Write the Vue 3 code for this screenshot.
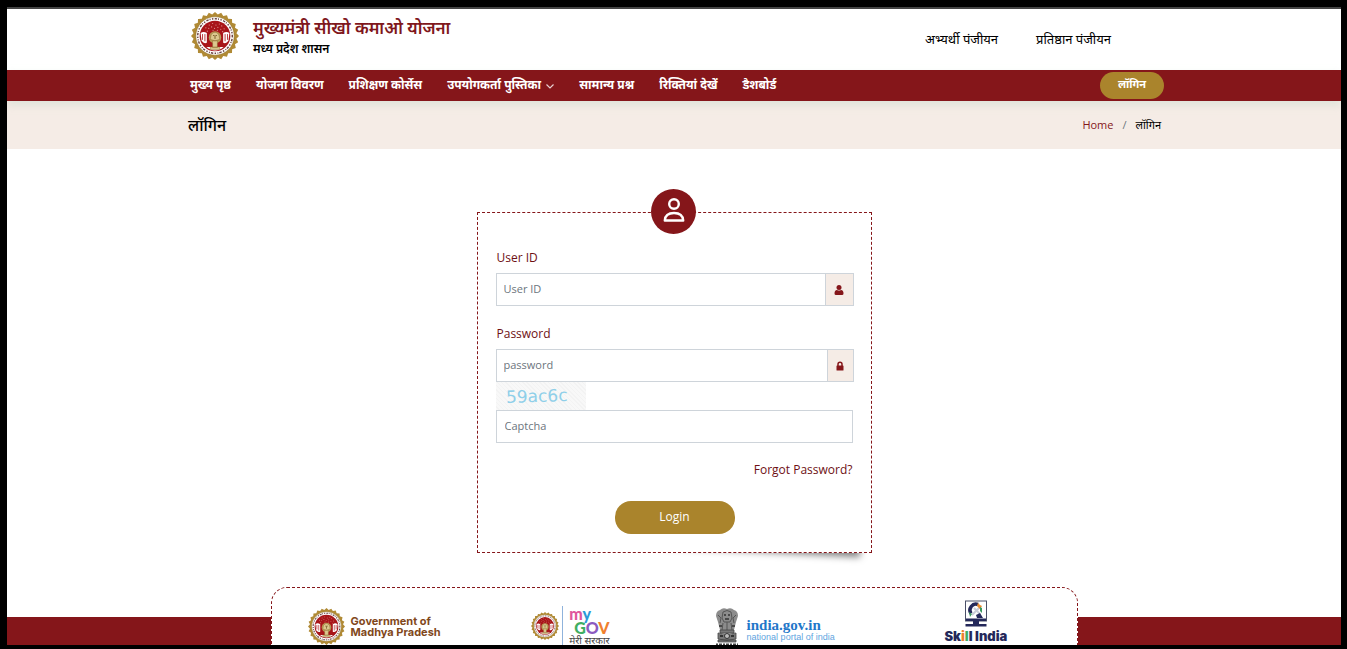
<template>
  <div class="page">
    <!-- shared artwork -->
    <svg class="sprite" aria-hidden="true">
      <symbol id="seal" viewBox="0 0 100 100">
        <path :d="sealEdge" fill="#b08a35" />
        <circle cx="50" cy="50" r="40" fill="#fff" stroke="#8d6d2a" stroke-width="1" />
        <circle cx="50" cy="50" r="36" fill="none" stroke="#6b4444" stroke-width="3" stroke-dasharray="3 3 5 2 2 3" />
        <circle cx="50" cy="50" r="32" fill="#a81519" />
        <g fill="#e09c97">
          <circle v-for="(d, i) in leaves" :key="i" :cx="d[0]" :cy="d[1]" r="1.2" />
        </g>
        <path d="M20 44q6-5 13 0v20q-6 3-11-4zM80 44q-6-5-13 0v20q6 3 11-4z" fill="#fff" />
        <path d="M24 46v12M29 46v15M76 46v12M71 46v15" stroke="#b9383a" stroke-width="2" />
        <path d="M32 73h36q-8 7-18 7t-18-7z" fill="#fff" />
        <circle cx="50" cy="53" r="13" fill="#b99b55" />
        <path d="M42 47q8-10 16 0l2 10q-10 6-20 0zM45 60h10v14H45zM40 73h20v5H40z" fill="#dcc88e" stroke="#86652b" stroke-width="1" />
        <path d="M46 49h2M52 49h2M50 48v8" stroke="#765724" stroke-width="2" />
      </symbol>
    </svg>

    <header class="header">
      <div class="container header-inner">
        <a href="#" class="brand">
          <svg class="brand-logo" aria-hidden="true"><use href="#seal" /></svg>
          <span class="brand-text">
            <strong class="brand-title">मुख्यमंत्री सीखो कमाओ योजना</strong>
            <strong class="brand-sub">मध्य प्रदेश शासन</strong>
          </span>
        </a>
        <div class="register-links">
          <a href="#">अभ्यर्थी पंजीयन</a>
          <a href="#">प्रतिष्ठान पंजीयन</a>
        </div>
      </div>
    </header>

    <nav class="navbar">
      <div class="container navbar-inner">
        <ul class="menu">
          <li v-for="item in menu" :key="item.label">
            <a href="#">
              {{ item.label }}
              <svg v-if="item.children" class="chevron" viewBox="0 0 8 5" aria-hidden="true">
                <path d="M.5.5 4 4 7.5.5" fill="none" stroke="#e8cfd0" stroke-width="1.200" />
              </svg>
            </a>
          </li>
        </ul>
        <a href="#" class="nav-login">लॉगिन</a>
      </div>
    </nav>

    <section class="title-bar">
      <div class="container title-inner">
        <h1>लॉगिन</h1>
        <div class="breadcrumb">
          <a href="#">Home</a>
          <span class="slash">/</span>
          <span>लॉगिन</span>
        </div>
      </div>
    </section>

    <main class="main">
      <form class="login-card" @submit.prevent>
        <div class="avatar">
          <svg viewBox="0 0 22 24" aria-hidden="true">
            <g fill="none" stroke="#fff" stroke-width="2.400">
              <circle cx="11" cy="6" r="4.800" />
              <path d="M1.800 22.500q.5-7.500 9.200-7.500t9.200 7.500z" stroke-linejoin="round" />
            </g>
          </svg>
        </div>

        <label for="userId">User ID</label>
        <div class="input-group">
          <input id="userId" v-model="userId" type="text" placeholder="User ID" />
          <span class="addon">
            <svg viewBox="0 0 10 10" aria-hidden="true">
              <circle cx="5" cy="2.500" r="2.500" />
              <path d="M.5 8.500Q.5 5 3 5q2 1.200 4 0 2.500 0 2.500 3.500Q9.500 10 8 10H2Q.5 10 .5 8.500z" />
            </svg>
          </span>
        </div>

        <label for="password">Password</label>
        <div class="input-group">
          <input id="password" v-model="password" type="password" placeholder="password" />
          <span class="addon addon-lock">
            <svg viewBox="0 0 10 10" aria-hidden="true">
              <path d="M3 5V3.200a2 2 0 0 1 4 0V5" fill="none" stroke="#85161a" stroke-width="1.500" />
              <rect x="1.500" y="4.500" width="7" height="5" rx=".6" />
            </svg>
          </span>
        </div>

        <div class="captcha"><span>59ac6c</span></div>
        <input v-model="captcha" class="captcha-input" type="text" placeholder="Captcha" aria-label="Captcha" />

        <a href="#" class="forgot">Forgot Password?</a>
        <button type="submit" class="login-btn">Login</button>
      </form>
    </main>

    <footer class="footer">
      <div class="partners">
        <a href="#" class="partner gov">
          <svg class="gov-logo" aria-hidden="true"><use href="#seal" /></svg>
          <span>Government of<br />Madhya Pradesh</span>
        </a>
        <a href="#" class="partner mygov">
          <svg class="mygov-logo" aria-hidden="true"><use href="#seal" /></svg>
          <span class="mygov-text">
            <b class="my"><i class="pink">m</i><i class="blue">y</i></b>
            <b class="gv"><i class="green">G</i><i class="violet">O</i><i class="orange">V</i></b>
            <small>मेरी सरकार</small>
          </span>
        </a>
        <a href="#" class="partner india">
          <svg class="lions" viewBox="0 0 24 38" aria-hidden="true">
            <path d="M5 2q3-3 7-1 4-2 7 1 4 1 4 6l-2 6-2 8H5l-2-8-2-6q0-5 4-6z" fill="#8c8c8c" />
            <path d="M8 4q4-3 8 0l1 6-2 4H9l-2-4zM3 7l3 3-1 5M21 7l-3 3 1 5M8 15l-1 7M16 15l1 7M12 14v8" fill="none" stroke="#555" />
            <path d="M9 7h2M13 7h2M10 11h4M4 18h3M17 18h3" stroke="#333" stroke-width="1.500" />
            <path d="M5 22h14v3H5zM3 25q9 3 18 0v6q-9 3-18 0zM3 32h18v2H3z" fill="#777" stroke="#444" stroke-width=".8" />
            <circle cx="12" cy="28" r="2.500" fill="#bbb" stroke="#333" />
            <path d="M5 28h3M16 28h3" stroke="#333" stroke-width="2" />
            <path d="M1 36.500h22" stroke="#444" stroke-width="2" stroke-dasharray="2 1 3 1" />
          </svg>
          <span class="india-text"><b>india.gov.in</b><small>national portal of india</small></span>
        </a>
        <a href="#" class="partner skill">
          <svg viewBox="0 0 24 28" aria-hidden="true">
            <rect x="1.500" y="1" width="21" height="20" fill="#fff" stroke="#4b5068" />
            <path d="M2 18.500h20V21H2zM9 21h6v3H9zM1.500 24h21v2.500h-21z" fill="#24285a" />
            <path d="M14 4.500a6 6 0 0 0-7 9" fill="none" stroke="#24285a" stroke-width="3.500" />
            <path d="m8 15 8-8M10 8l6 6" stroke="#c9cdd8" stroke-width="2" />
            <path d="m14 3 2 2 2 1-2 3-3-3z" fill="#e98b2f" />
            <path d="m16 7 2 1v5l-2-2zM5 12l3 2-2 3z" fill="#3c9960" />
            <path d="m12 15 4-2 3 5h-6z" fill="#24285a" />
          </svg>
          <b>Sk<i class="orange">i</i><i class="green">l</i>l India</b>
        </a>
      </div>
    </footer>
  </div>
</template>

<script setup>
import { ref } from 'vue';

const userId = ref('');
const password = ref('');
const captcha = ref('');

const menu = [
  { label: 'मुख्य पृष्ठ' },
  { label: 'योजना विवरण' },
  { label: 'प्रशिक्षण कोर्सेस' },
  { label: 'उपयोगकर्ता पुस्तिका', children: true },
  { label: 'सामान्य प्रश्न' },
  { label: 'रिक्तियां देखें' },
  { label: 'डैशबोर्ड' },
];

// Pointed rim of the state seal
const teeth = 24;
const sealEdge =
  Array.from({ length: teeth * 2 }, (_, i) => {
    const r = i % 2 ? 45 : 50;
    const a = (i * Math.PI) / teeth;
    return `${i ? 'L' : 'M'}${(50 + r * Math.cos(a)).toFixed(1)} ${(50 + r * Math.sin(a)).toFixed(1)}`;
  }).join('') + 'z';

// Leaves of the banyan tree inside the seal
const leaves = [
  [38, 27], [45, 24], [52, 27], [59, 25], [64, 29], [31, 33], [37, 34], [43, 31],
  [49, 34], [56, 32], [62, 36], [69, 35], [34, 40], [66, 41], [46, 38], [55, 38],
];
</script>

<style>
body {
  margin: 0;
}
</style>

<style scoped>
.page {
  display: flex;
  flex-direction: column;
  box-sizing: border-box;
  height: 100vh;
  overflow: hidden;
  border: solid #000;
  border-width: 7px 6px 4px 7px;
  background: #fff;
  color: #000;
  font-family: "Open Sans", "Noto Sans", "Noto Sans Devanagari", sans-serif;
  font-size: 12px;
}

.page * {
  box-sizing: border-box;
}

.page > * {
  flex-shrink: 0;
}

a {
  color: inherit;
  text-decoration: none;
}

i {
  font-style: normal;
}

.sprite {
  position: absolute;
  width: 0;
  height: 0;
}

.container {
  width: 100%;
  max-width: 980px;
  margin: 0 auto;
  padding-left: 4px;
}

/* Header */
.header {
  border-top: 2px solid #444;
}

.header-inner {
  display: flex;
  align-items: center;
  justify-content: space-between;
  height: 61px;
}

.brand {
  display: flex;
  align-items: center;
  gap: 14px;
  padding: 0 0 7px 3px;
}

.brand-logo {
  width: 48px;
  height: 48px;
}

.brand-text {
  display: flex;
  flex-direction: column;
  padding-top: 2px;
}

.brand-title {
  color: #7f171c;
  font-size: 17px;
  font-weight: 600;
  line-height: 24px;
}

.brand-sub {
  font-size: 12px;
  font-weight: 600;
  line-height: 18px;
}

.register-links {
  display: flex;
  gap: 38px;
  padding: 0 53px 2px 0;
  font-size: 13px;
}

/* Navigation */
.navbar {
  position: relative;
  background: #85161a;
  color: #fff;
  box-shadow: 0 4px 8px rgba(190, 215, 200, 0.4);
}

.navbar-inner {
  display: flex;
  align-items: center;
  justify-content: space-between;
  height: 31px;
}

.menu {
  display: flex;
  gap: 25px;
  margin: 0;
  padding: 0 0 2px 2px;
  list-style: none;
  font-weight: 700;
  line-height: 20px;
}

.chevron {
  width: 8px;
  height: 5px;
  margin-left: 2px;
}

.nav-login {
  width: 64px;
  height: 27px;
  border-radius: 14px;
  background: #aa842c;
  font-size: 11px;
  font-weight: 700;
  line-height: 24px;
  text-align: center;
}

/* Title bar */
.title-bar {
  background: #f5ece6;
}

.title-inner {
  display: flex;
  align-items: center;
  justify-content: space-between;
  height: 48px;
}

.title-inner h1 {
  margin: 0;
  font-size: 16px;
  font-weight: 500;
}

.breadcrumb {
  display: flex;
  gap: 9px;
  padding: 0 3px 2px 0;
  font-size: 11px;
}

.breadcrumb a {
  color: #85161a;
}

.slash {
  color: #6c757d;
}

/* Login form */
.main {
  position: relative;
  z-index: 0;
  padding: 63px 16px 34px;
}

.login-card {
  position: relative;
  display: flex;
  flex-direction: column;
  width: 100%;
  max-width: 395px;
  margin: 0 auto;
  padding: 32px 17px 18px 18px;
  border: 1px dashed #85161a;
  background: #fff;
}

/* lifted corner shadow */
.login-card::after {
  content: "";
  position: absolute;
  z-index: -1;
  right: 10px;
  bottom: 10px;
  width: 50%;
  height: 20px;
  box-shadow: 0 10px 7px rgba(0, 0, 0, 0.5);
  transform: rotate(3deg);
}

.avatar {
  position: absolute;
  top: -24px;
  left: 50%;
  display: flex;
  align-items: center;
  justify-content: center;
  width: 45px;
  height: 45px;
  margin-left: -23px;
  padding-bottom: 4px;
  border-radius: 50%;
  background: #85161a;
}

.avatar svg {
  width: 22px;
  height: 24px;
}

label {
  padding: 0 0 2px 1px;
  color: #6e1014;
  line-height: 26px;
}

.input-group {
  display: flex;
  margin-bottom: 15px;
}

.input-group:has(+ .captcha) {
  margin-bottom: 0;
}

input {
  min-width: 0;
  height: 33px;
  padding: 0 8px 2px 7px;
  border: 1px solid #ced4da;
  background: #fff;
  color: #495057;
  font: 11px "Open Sans", "Noto Sans", sans-serif;
}

input::placeholder {
  color: #6c757d;
  opacity: 1;
}

.input-group input {
  flex: 1;
}

.addon {
  display: flex;
  align-items: center;
  justify-content: center;
  width: 29px;
  margin-left: -1px;
  border: 1px solid #ced4da;
  background: #f5ece6;
}

.addon-lock {
  width: 27px;
}

.addon svg {
  width: 10px;
  height: 10px;
  fill: #85161a;
}

.captcha {
  width: 90px;
  height: 28px;
  padding-left: 10px;
  background: repeating-linear-gradient(45deg, #f8f8f8 0 2px, #f3f3f3 2px 3px);
  color: #8fcfe9;
  font: 17px/28px "DejaVu Sans", sans-serif;
}

.captcha span {
  display: inline-block;
  transform: rotate(-2deg);
}

.captcha-input {
  margin-right: 1px;
  padding-left: 8px;
}

.forgot {
  align-self: flex-end;
  margin: 17px 1px 0 0;
  color: #6e1014;
  line-height: 20px;
}

.login-btn {
  align-self: center;
  width: 120px;
  height: 33px;
  margin-top: 21px;
  padding: 0 0 2px;
  border: 0;
  border-radius: 16px;
  background: #aa842c;
  color: #fff;
  font: 12px "Open Sans", "Noto Sans", sans-serif;
}

/* Footer */
.footer {
  padding: 0 16px;
  background: linear-gradient(#fff 30px, #85161a 30px);
}

.partners {
  display: flex;
  width: 100%;
  max-width: 807px;
  height: 90px;
  margin: 0 auto;
  padding-top: 12px;
  border: 1px dashed #85161a;
  border-radius: 16px;
  background: #fff;
}

.partner {
  display: flex;
  width: 25%;
  align-items: flex-start;
  justify-content: center;
}

.gov {
  gap: 6px;
  padding-left: 4px;
  color: #81481b;
  font: 700 11px/11px Inter, sans-serif;
}

.gov span {
  padding-top: 16px;
}

.gov-logo {
  width: 37px;
  height: 37px;
  margin-top: 8px;
}

.mygov {
  padding-right: 6px;
}

.mygov-logo {
  width: 28px;
  height: 28px;
  margin-top: 12px;
}

.mygov-text {
  display: flex;
  flex-direction: column;
  height: 44px;
  margin: 6px 0 0 3px;
  padding-left: 6px;
  border-left: 1px solid #8fb3dc;
  font-family: Lato, "Noto Sans", sans-serif;
}

.my {
  font-size: 16px;
  font-weight: 900;
  line-height: 16px;
}

.gv {
  padding-left: 5px;
  font-size: 16px;
  font-weight: 900;
  line-height: 12px;
}

.mygov small {
  color: #444;
  font-size: 10px;
  line-height: 12px;
}

.pink {
  color: #e0559c;
}

.blue {
  color: #2c9ad8;
}

.green {
  color: #3fae62;
}

.violet {
  color: #8b5bc0;
}

.orange {
  color: #f0802e;
}

.india {
  gap: 8px;
  color: #1f77c9;
}

.lions {
  width: 24px;
  height: 38px;
  margin-top: 8px;
}

.india-text {
  display: flex;
  flex-direction: column;
  padding-top: 18px;
}

.india-text b {
  font: 700 15px/15px "Liberation Serif", serif;
}

.india-text small {
  color: #5fa4e0;
  font: 9px/9px "Liberation Sans", sans-serif;
}

.skill {
  flex-direction: column;
  align-items: center;
  justify-content: flex-start;
  color: #24285a;
  font: 700 13px/17px Inter, sans-serif;
}

.skill svg {
  width: 24px;
  height: 28px;
}
</style>
